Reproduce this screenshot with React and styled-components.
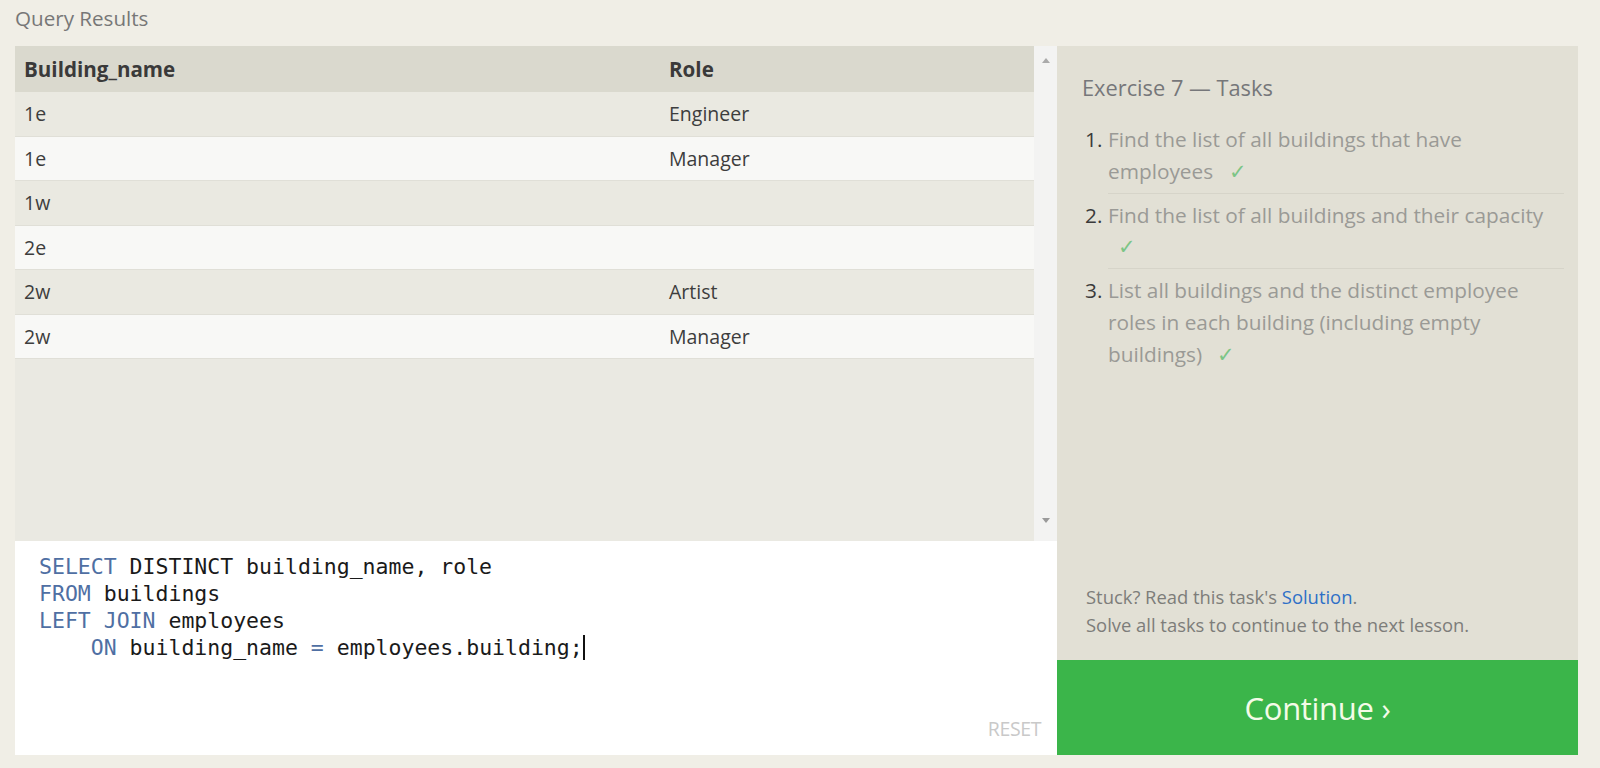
import React from 'react';
import styled, { createGlobalStyle } from 'styled-components';

const GlobalStyle = createGlobalStyle`
    html, body {
        margin: 0;
        padding: 0;
        background: #f0eee6;
    }
    body {
        font-family: "Open Sans", "Liberation Sans", sans-serif;
        color: #333;
    }
`;

const Page = styled.div`
    height: 768px;
    box-sizing: border-box;
    padding: 0 22px 13px 15px;
    display: flex;
    flex-direction: column;
`;

const PageTitle = styled.div`
    height: 46px;
    line-height: 36px;
    font-size: 20.6px;
    color: #777;
`;

const Workspace = styled.div`
    flex: 1;
    display: flex;
    min-height: 0;
`;

const LeftColumn = styled.div`
    flex: 1;
    display: flex;
    flex-direction: column;
`;

const ResultsArea = styled.div`
    height: 495px;
    display: flex;
    background: #eae9e2;
`;

const Table = styled.div`
    flex: 1;
    display: flex;
    flex-direction: column;
`;

const Row = styled.div`
    display: grid;
    grid-template-columns: 645px 1fr;
    box-sizing: border-box;
    flex: none;
    height: ${(p) => (p.$header ? '46px' : '44.5px')};
    align-items: center;
    background: ${(p) => (p.$header ? '#dad9ce' : p.$odd ? '#eae9e1' : '#f8f8f6')};
    border-bottom: ${(p) => (p.$header ? 'none' : '1px solid #e0dfd7')};
    font-size: ${(p) => (p.$header ? '20.6px' : '19.5px')};
    font-weight: ${(p) => (p.$header ? 700 : 400)};
    color: ${(p) => (p.$header ? '#3a3a3a' : '#3d3d3d')};
`;

const Cell = styled.div`
    padding-left: 9px;
    white-space: nowrap;
`;

const Scrollbar = styled.div`
    width: 23px;
    background: #f3f3f2;
    display: flex;
    flex-direction: column;
    justify-content: space-between;
    align-items: center;
    padding: 12px 0 18px;
    box-sizing: border-box;
`;

const Arrow = styled.div`
    width: 0;
    height: 0;
    border-left: 4px solid transparent;
    border-right: 4px solid transparent;
    ${(p) =>
        p.$down
            ? 'border-top: 5px solid #9a9a9a;'
            : 'border-bottom: 5px solid #aaa;'}
`;

const Editor = styled.div`
    flex: 1;
    background: #fff;
    position: relative;
    padding: 12px 24px;
    font-family: "DejaVu Sans Mono", "Liberation Mono", monospace;
    font-size: 21.5px;
    line-height: 27px;
    color: #1a1a1a;
    white-space: pre;
`;

const Keyword = styled.span`
    color: #4f6fa3;
`;

const Cursor = styled.span`
    display: inline-block;
    width: 2px;
    height: 25px;
    background: #111;
    vertical-align: -5px;
`;

const ResetButton = styled.span`
    position: absolute;
    right: 16px;
    bottom: 13px;
    font-family: "Open Sans", "Liberation Sans", sans-serif;
    font-size: 19.5px;
    color: #c9c9c9;
    letter-spacing: -0.4px;
`;

const TaskPanel = styled.div`
    width: 521px;
    display: flex;
    flex-direction: column;
`;

const TaskBody = styled.div`
    flex: 1;
    background: #e2e0d5;
    padding: 27px 14px 22px 25px;
    display: flex;
    flex-direction: column;
`;

const TaskTitle = styled.div`
    font-size: 21.8px;
    color: #76777a;
    margin-bottom: 16px;
`;

const TaskList = styled.ol`
    margin: 0;
    padding: 0;
    list-style: none;
    counter-reset: task;
`;

const TaskItem = styled.li`
    counter-increment: task;
    font-size: 20.8px;
    line-height: 31.8px;
    color: #9a9a96;
    padding: 6px 0 5px;
    border-bottom: ${(p) => (p.$last ? 'none' : '1px solid #d6d4c9')};
    margin-left: 26px;
    position: relative;

    &::before {
        content: counter(task) '.';
        position: absolute;
        left: -23px;
        color: #3a3a3a;
    }
`;

const Check = styled.span`
    display: inline-block;
    color: #7cc586;
    margin-left: 10px;
`;

const Hint = styled.div`
    margin-top: auto;
    margin-left: 4px;
    font-size: 18.4px;
    line-height: 27.5px;
    color: #7d7d7a;
`;

const SolutionLink = styled.a`
    color: #2e70c7;
    text-decoration: none;
`;

const ContinueButton = styled.div`
    height: 95px;
    background: #3bb54a;
    color: #f4fbe8;
    font-size: 31px;
    display: flex;
    align-items: center;
    justify-content: center;
    letter-spacing: -0.3px;
`;

const rows = [
    ['1e', 'Engineer'],
    ['1e', 'Manager'],
    ['1w', ''],
    ['2e', ''],
    ['2w', 'Artist'],
    ['2w', 'Manager'],
];

const tasks = [
    'Find the list of all buildings that have employees',
    'Find the list of all buildings and their capacity',
    'List all buildings and the distinct employee roles in each building (including empty buildings)',
];

const App = () => {
    return (
        <>
            <GlobalStyle />
            <Page>
                <PageTitle>Query Results</PageTitle>
                <Workspace>
                    <LeftColumn>
                        <ResultsArea>
                            <Table>
                                <Row $header>
                                    <Cell>Building_name</Cell>
                                    <Cell>Role</Cell>
                                </Row>
                                {rows.map(([name, role], i) => (
                                    <Row key={i} $odd={i % 2 === 0}>
                                        <Cell>{name}</Cell>
                                        <Cell>{role}</Cell>
                                    </Row>
                                ))}
                            </Table>
                            <Scrollbar>
                                <Arrow />
                                <Arrow $down />
                            </Scrollbar>
                        </ResultsArea>
                        <Editor>
                            <Keyword>SELECT</Keyword> DISTINCT building_name, role{'\n'}
                            <Keyword>FROM</Keyword> buildings{'\n'}
                            <Keyword>LEFT JOIN</Keyword> employees{'\n'}
                            {'    '}<Keyword>ON</Keyword> building_name <Keyword>=</Keyword> employees.building;<Cursor />
                            <ResetButton>RESET</ResetButton>
                        </Editor>
                    </LeftColumn>
                    <TaskPanel>
                        <TaskBody>
                            <TaskTitle>Exercise 7 — Tasks</TaskTitle>
                            <TaskList>
                                {tasks.map((t, i) => (
                                    <TaskItem key={i} $last={i === tasks.length - 1}>
                                        {t} <Check>✓</Check>
                                    </TaskItem>
                                ))}
                            </TaskList>
                            <Hint>
                                Stuck? Read this task's <SolutionLink href="#">Solution</SolutionLink>.
                                <br />
                                Solve all tasks to continue to the next lesson.
                            </Hint>
                        </TaskBody>
                        <ContinueButton>Continue ›</ContinueButton>
                    </TaskPanel>
                </Workspace>
            </Page>
        </>
    );
};

export default App;
